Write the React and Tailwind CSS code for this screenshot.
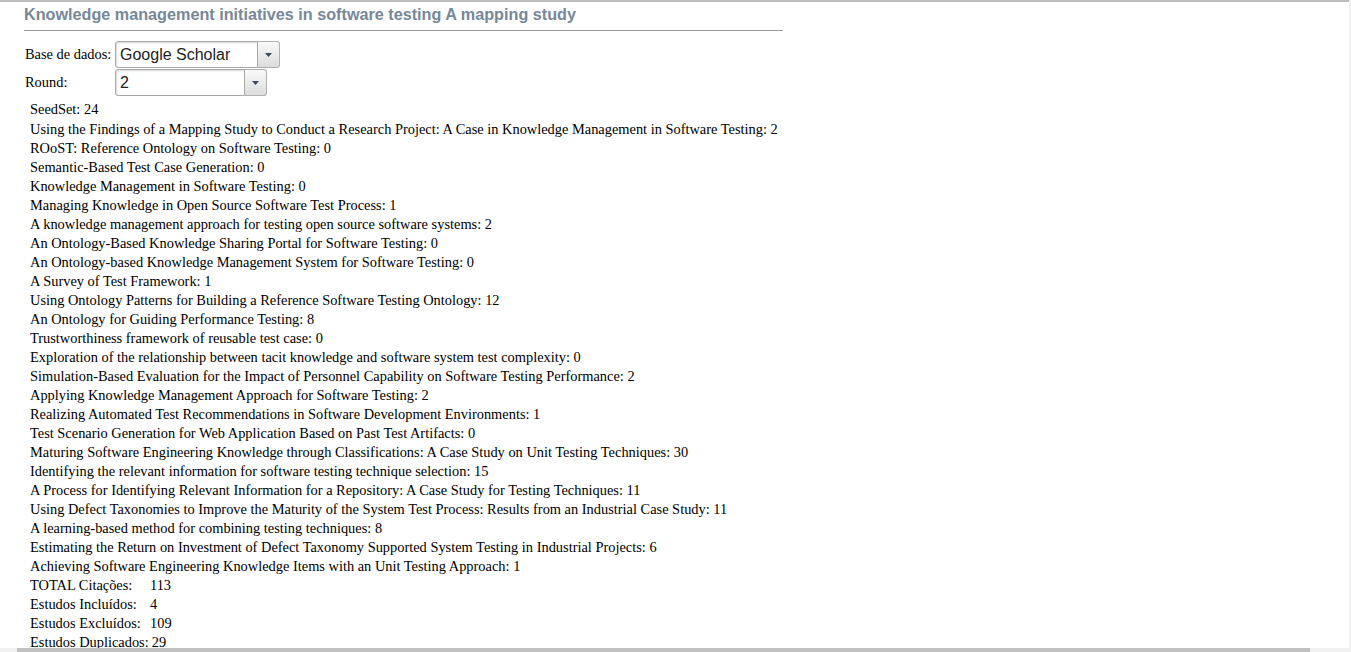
import React from "react";

const papers = [
  ["Using the Findings of a Mapping Study to Conduct a Research Project: A Case in Knowledge Management in Software Testing", 2],
  ["ROoST: Reference Ontology on Software Testing", 0],
  ["Semantic-Based Test Case Generation", 0],
  ["Knowledge Management in Software Testing", 0],
  ["Managing Knowledge in Open Source Software Test Process", 1],
  ["A knowledge management approach for testing open source software systems", 2],
  ["An Ontology-Based Knowledge Sharing Portal for Software Testing", 0],
  ["An Ontology-based Knowledge Management System for Software Testing", 0],
  ["A Survey of Test Framework", 1],
  ["Using Ontology Patterns for Building a Reference Software Testing Ontology", 12],
  ["An Ontology for Guiding Performance Testing", 8],
  ["Trustworthiness framework of reusable test case", 0],
  ["Exploration of the relationship between tacit knowledge and software system test complexity", 0],
  ["Simulation-Based Evaluation for the Impact of Personnel Capability on Software Testing Performance", 2],
  ["Applying Knowledge Management Approach for Software Testing", 2],
  ["Realizing Automated Test Recommendations in Software Development Environments", 1],
  ["Test Scenario Generation for Web Application Based on Past Test Artifacts", 0],
  ["Maturing Software Engineering Knowledge through Classifications: A Case Study on Unit Testing Techniques", 30],
  ["Identifying the relevant information for software testing technique selection", 15],
  ["A Process for Identifying Relevant Information for a Repository: A Case Study for Testing Techniques", 11],
  ["Using Defect Taxonomies to Improve the Maturity of the System Test Process: Results from an Industrial Case Study", 11],
  ["A learning-based method for combining testing techniques", 8],
  ["Estimating the Return on Investment of Defect Taxonomy Supported System Testing in Industrial Projects", 6],
  ["Achieving Software Engineering Knowledge Items with an Unit Testing Approach", 1],
];

const totals = [
  ["TOTAL Citações:", 113],
  ["Estudos Incluídos:", 4],
  ["Estudos Excluídos:", 109],
  ["Estudos Duplicados:", 29],
];

const Dropdown = ({ value, width }) => (
  <div className={`flex h-[27px] ${width}`}>
    <div className="flex-1 flex items-center pl-[4px] text-[16px] text-[#222] bg-white rounded-l-[3px] border border-[#a8a8a8] shadow-[inset_1px_1px_2px_rgba(0,0,0,0.15)] font-['Liberation_Sans',Arial,sans-serif]">
      {value}
    </div>
    <div className="w-[22px] flex items-center justify-center rounded-r-[3px] border border-l-0 border-[#b0b0b0] bg-gradient-to-b from-[#fafafa] to-[#dcdcdc]">
      <svg width="7" height="4" viewBox="0 0 7 4">
        <path d="M0 0 L7 0 L3.5 4 Z" fill="#3b4b5b" />
      </svg>
    </div>
  </div>
);

export default function App() {
  return (
    <div className="h-[652px] w-[1351px] overflow-hidden flex flex-col bg-white font-['Liberation_Serif','Times_New_Roman',serif] text-[14.4px] text-black">
      <div className="flex flex-1 min-h-0">
        <div className="flex-1 min-w-0 border-t-2 border-[#bdbdbd]">
          <div className="pl-[24px]">
            <h1 className="w-[759px] pt-[2px] h-[29px] text-[16.2px] leading-[20px] font-bold text-[#778899] font-['Liberation_Sans',Arial,sans-serif] border-b border-[#9a9a9a] whitespace-nowrap">
              Knowledge management initiatives in software testing A mapping study
            </h1>
          </div>
          <div className="pl-[25px] pt-[10px] flex flex-col gap-[1px]">
            <div className="flex items-center">
              <span className="w-[90px] leading-[19px] whitespace-nowrap">Base de dados:</span>
              <Dropdown value="Google Scholar" width="w-[165px]" />
            </div>
            <div className="flex items-center">
              <span className="w-[90px] leading-[19px]">Round:</span>
              <Dropdown value="2" width="w-[152px]" />
            </div>
          </div>
          <div className="pl-[30px] pt-[4px]">
            <div className="h-[20px] leading-[19px]">SeedSet: 24</div>
            {papers.map(([title, n]) => (
              <div key={title} className="h-[19px] leading-[19px] whitespace-nowrap">
                {title}: {n}
              </div>
            ))}
            {totals.map(([label, n]) => (
              <div key={label} className="flex h-[19px] leading-[19px]">
                <span className="min-w-[120px] pr-[3px] whitespace-nowrap">{label}</span>
                <span>{n}</span>
              </div>
            ))}
          </div>
        </div>
        <div className="w-[2px] bg-[#f0f0f0]" />
      </div>
      <div className="h-[4px] flex bg-[#f0f0f0]">
        <div className="ml-[17px] w-[1293px] bg-[#c1c1c1]" />
      </div>
    </div>
  );
}
